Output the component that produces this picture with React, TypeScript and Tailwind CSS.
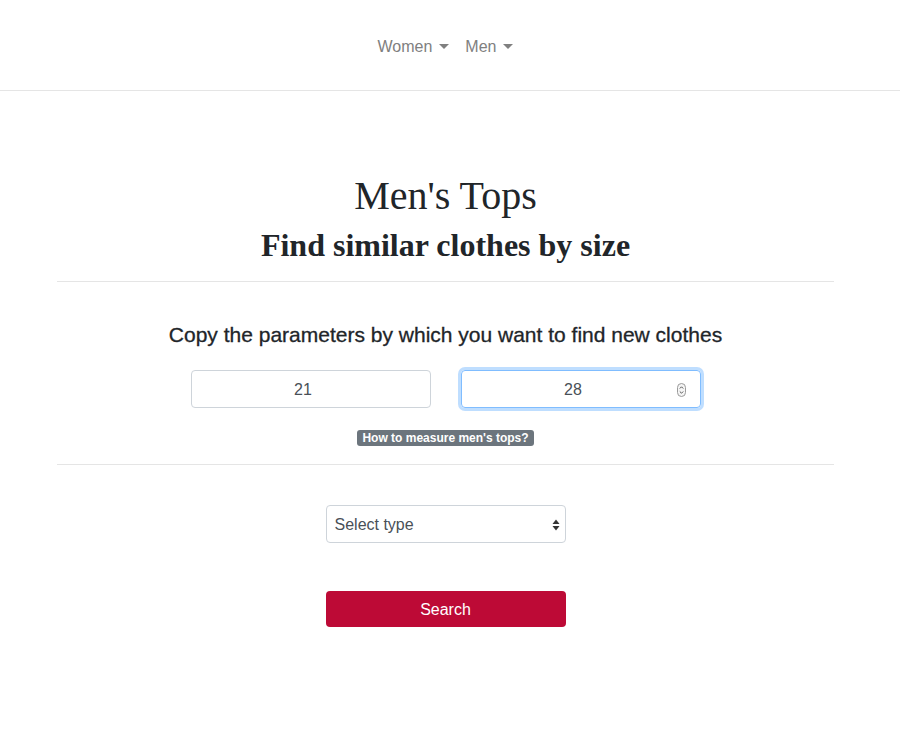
import React from "react";

function Caret() {
  return (
    <span className="ml-[7px] inline-block w-0 h-0 border-l-[5px] border-r-[5px] border-t-[5px] border-l-transparent border-r-transparent border-t-[#808080] align-[3px]" />
  );
}

export default function App() {
  return (
    <div className="w-full min-h-[729px] bg-white text-[#212529]" style={{ fontFamily: '"Liberation Sans", Arial, sans-serif' }}>
      <nav className="h-[91px] border-b border-[#e5e5e5] flex items-center justify-center pt-[3px] pr-[9px]">
        <div className="flex items-center gap-[16px] text-[16px] text-[#808080]">
          <span className="flex items-center">Women<Caret /></span>
          <span className="flex items-center">Men<Caret /></span>
        </div>
      </nav>
      <div className="w-[891px] px-[57px] flex flex-col items-center">
        <h1 className="mt-[81px] text-[40px] leading-[48px] font-normal" style={{ fontFamily: '"Liberation Serif", "Times New Roman", serif' }}>Men's Tops</h1>
        <h2 className="mt-[6px] text-[32px] leading-[38px] font-bold" style={{ fontFamily: '"Liberation Serif", "Times New Roman", serif' }}>Find similar clothes by size</h2>
        <div className="mt-[17px] w-full border-t border-[#e5e5e5]" />
        <h5 className="mt-[41px] text-[21px] leading-[24px] font-medium" style={{ WebkitTextStroke: "0.3px #212529" }}>Copy the parameters by which you want to find new clothes</h5>
        <div className="mt-[23px] flex gap-[30px]">
          <div className="w-[240px] h-[38px] border border-[#ced4da] rounded-[4px] flex items-center justify-center pr-[15px] pt-[1px] text-[16px] text-[#495057]">21</div>
          <div className="relative w-[240px] h-[38px] border border-[#80bdff] rounded-[4px] flex items-center justify-center pr-[15px] pt-[1px] text-[16px] text-[#495057] shadow-[0_0_0_3px_rgba(0,123,255,0.25)]">
            28
            <svg className="absolute right-[14px] top-[12px]" width="9" height="14" viewBox="0 0 9 14">
              <rect x="0.5" y="0.5" width="8" height="13" rx="4" fill="#f5f5f5" stroke="#9a9a9a" />
              <path d="M2.8 5.5 L4.5 3.8 L6.2 5.5" fill="none" stroke="#444" strokeWidth="0.9" />
              <path d="M2.8 8.5 L4.5 10.2 L6.2 8.5" fill="none" stroke="#444" strokeWidth="0.9" />
            </svg>
          </div>
        </div>
        <span className="mt-[22px] h-[16px] px-[5px] rounded-[3px] bg-[#6c757d] text-white text-[12px] font-bold leading-[16px]">How to measure men's tops?</span>
        <div className="mt-[18px] w-full border-t border-[#e5e5e5]" />
        <div className="mt-[40px] relative w-[240px] h-[38px] border border-[#ced4da] rounded-[4px] flex items-center pl-[8px] pt-[1px] text-[16px] text-[#495057]">
          Select type
          <svg className="absolute right-[5px] top-[13px]" width="8" height="12" viewBox="0 0 8 12">
            <path d="M0.5 5 L4 0.5 L7.5 5 Z" fill="#333" />
            <path d="M0.5 7 L4 11.5 L7.5 7 Z" fill="#333" />
          </svg>
        </div>
        <button className="mt-[48px] w-[240px] h-[36px] rounded-[4px] bg-[#bd0a36] text-white text-[16px] pt-[1px]">Search</button>
      </div>
    </div>
  );
}
